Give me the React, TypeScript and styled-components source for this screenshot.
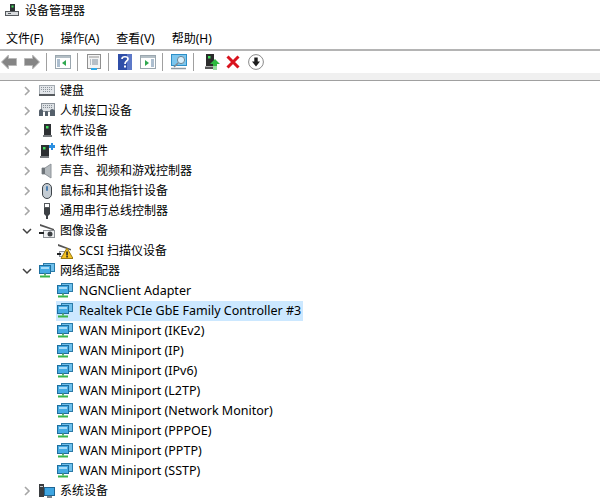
import { ReactNode } from 'react';
import styled, { createGlobalStyle } from 'styled-components';

const GlobalStyle = createGlobalStyle`
  html, body {
    margin: 0;
    padding: 0;
    background: #fff;
  }
`;

const Window = styled.div`
  width: 600px;
  height: 501px;
  overflow: hidden;
  background: #fff;
  color: #000;
  font-family: "Noto Sans", "Noto Sans CJK SC", sans-serif;
  font-size: 12px;
`;

const TitleBar = styled.div`
  display: flex;
  align-items: center;
  gap: 6px;
  height: 20px;
  padding-left: 5px;
`;

const MenuBar = styled.div`
  display: flex;
  align-items: center;
  gap: 17px;
  height: 29px;
  padding-left: 6px;
`;

const MenuItem = styled.span`
  line-height: 20px;
  padding-top: 8px;
`;

const Toolbar = styled.div`
  display: flex;
  align-items: center;
  height: 22px;
  padding-left: 1px;
  border-top: 2px solid #b4b4b4;
`;

const ToolIcon = styled.span<{ $gap?: number }>`
  display: flex;
  margin-left: ${p => p.$gap ?? 0}px;
`;

const Separator = styled.span`
  width: 1px;
  height: 18px;
  margin: 0 8px 0 6px;
  background: #a0a0a0;
`;

const ToolbarEdge = styled.div`
  height: 7px;
  background: #f0f0f0;
  border-bottom: 1px solid #a0a0a0;
`;

const Tree = styled.div`
  display: flex;
  flex-direction: column;
`;

const Row = styled.div<{ $child?: boolean }>`
  display: flex;
  align-items: center;
  height: 20px;
  padding-left: ${p => (p.$child ? 56 : 20)}px;
`;

const Chevron = styled.span`
  display: flex;
  justify-content: center;
  width: 14px;
  margin-right: 5px;
`;

const Label = styled.span<{ $selected?: boolean }>`
  display: flex;
  align-items: center;
  gap: 5px;
  height: 20px;
  white-space: nowrap;
  padding-right: 2px;
  background: ${p => (p.$selected ? '#cce8ff' : 'transparent')};
`;

const LabelText = styled.span<{ $latin?: boolean }>`
  margin-bottom: 2px;
  font-size: ${p => (p.$latin ? 12.5 : 12)}px;
`;

const ChildIcon = styled.span`
  display: flex;
  width: 18px;
  justify-content: center;
`;

const Svg = ({ children, w = 16, h = 16 }: { children: ReactNode; w?: number; h?: number }) => (
  <svg width={w} height={h} viewBox={`0 0 ${w} ${h}`} fill="none">{children}</svg>
);

const Right = () => (
  <svg width="8" height="10" viewBox="0 0 8 10"><path d="M2 1l4 4-4 4" stroke="#a6a6a6" strokeWidth="1.6" fill="none" /></svg>
);
const Down = () => (
  <svg width="10" height="8" viewBox="0 0 10 8"><path d="M1 2l4 4 4-4" stroke="#404040" strokeWidth="1.5" fill="none" /></svg>
);

const Arrow = ({ flip }: { flip?: boolean }) => (
  <svg width="16" height="16" viewBox="0 0 16 16">
    <path
      d={flip ? 'M0.500 4.500h8V1L15.500 8l-7 7v-3.500h-8z' : 'M15.500 4.500h-8V1L0.500 8l7 7v-3.500h8z'}
      fill="#858585"
      stroke="#b8b8b8"
    />
  </svg>
);

const PaneIcon = ({ arrow }: { arrow: 'left' | 'right' }) => (
  <Svg>
    <rect x="0.500" y="1.500" width="15" height="13" fill="#fff" stroke="#9aa6ae" />
    <rect x="1" y="2" width="14" height="2" fill="#b4bfc6" />
    <path d={arrow === 'left' ? 'M11 6v6L7 9z' : 'M5 6v6l4-3z'} fill="#2fa84f" />
    <path d={arrow === 'left' ? 'M2 6h3M2 8h3M2 10h3M2 12h3' : 'M11 6h3M11 8h3M11 10h3M11 12h3'} stroke="#5b7fa0" />
  </Svg>
);

const SheetIcon = () => (
  <Svg>
    <rect x="1.500" y="0.500" width="13" height="14" fill="#f4f4f4" stroke="#8f8f8f" />
    <rect x="3" y="2" width="10" height="2" fill="#c4c4c4" />
    <path d="M4 6h1M4 8h1M4 10h1M6 6h6M6 8h6M6 10h6" stroke="#7a8a9a" />
    <rect x="5" y="14" width="6" height="2" fill="#2da8e8" />
  </Svg>
);

const HelpIcon = () => (
  <svg width="14" height="16" viewBox="0 0 14 16">
    <rect width="14" height="16" fill="#2f4ea8" />
    <rect x="9" width="5" height="16" fill="#5c78c8" />
    <path d="M4 5c0-3 6-3 6 0 0 2-3 2-3 5" stroke="#fff" strokeWidth="1.700" fill="none" />
    <rect x="6" y="11.500" width="2" height="2" fill="#fff" />
  </svg>
);

const ScanIcon = () => (
  <Svg>
    <rect x="0.500" y="0.500" width="15" height="11" fill="#7cc6ee" stroke="#2c8fc8" />
    <path d="M0 14.500h15" stroke="#8f9aa3" strokeWidth="1.500" />
    <circle cx="10" cy="6" r="3.600" fill="#d6eefb" stroke="#6f8796" strokeWidth="1" />
    <path d="M7 9l-4 4" stroke="#7f8a92" strokeWidth="1.600" />
  </Svg>
);

const UpdateIcon = () => (
  <Svg>
    <rect x="2" y="0" width="8" height="12" fill="#2b2b2b" />
    <rect x="4" y="2" width="2.500" height="2.500" fill="#3fe05a" />
    <rect x="1" y="12.500" width="8" height="2.500" fill="#555" />
    <path d="M11 5l5 5h-3v2h-4v-2H6z" fill="#2dbb3f" />
    <path d="M9 13h4M9 15h4" stroke="#2dbb3f" />
  </Svg>
);

const RemoveIcon = () => (
  <svg width="14" height="14" viewBox="0 0 14 14">
    <path d="M1.500 1.500l11 11M12.500 1.500l-11 11" stroke="#d9131e" strokeWidth="3" />
  </svg>
);

const InstallIcon = () => (
  <Svg>
    <circle cx="8" cy="8" r="7.400" fill="#fff" stroke="#8a8a8a" />
    <path d="M6.300 3.500h3.400v4H12l-4 5-4-5h2.300z" fill="#1c1c1c" />
  </Svg>
);

const KeyboardIcon = () => (
  <Svg>
    <rect x="0.500" y="2.500" width="15" height="9" fill="#e3e6ea" stroke="#a3aab0" />
    <path d="M2 4.500h12M2 6.500h12M4 8.500h8" stroke="#8c949b" strokeDasharray="1 1" />
    <rect x="0" y="11" width="16" height="2" fill="#55595d" />
  </Svg>
);

const HidIcon = () => (
  <Svg>
    <rect x="2.500" y="0.500" width="13" height="8" fill="#dde1e5" stroke="#8f969d" />
    <path d="M4 2.500h10M4 4.500h10" stroke="#868e95" strokeDasharray="1 1" />
    <path d="M0 13V8c0-1 1-2 2-2s2 1 2 2v5zM6 13V9c0-1 1-1 1.500-1S9 8 9 9v4zM11 13V8c0-1 1-2 2-2s3 1 3 2v5z" fill="#55606b" />
  </Svg>
);

const DeviceIcon = () => (
  <Svg>
    <rect x="5" y="1" width="7" height="11" fill="#2d3033" />
    <rect x="7" y="3" width="2.500" height="2.500" fill="#45e060" />
    <rect x="4" y="12" width="9" height="2" fill="#777b7f" />
  </Svg>
);

const ComponentIcon = () => (
  <Svg>
    <rect x="2" y="2" width="8" height="11" fill="#2d3033" />
    <rect x="4" y="4" width="2.500" height="2.500" fill="#45e060" />
    <rect x="1" y="13" width="9" height="2" fill="#777b7f" />
    <path d="M12 0h2v2h2v3h-2v2h-2V5h-2V2h2z" fill="#2b8fe0" />
  </Svg>
);

const SoundIcon = () => (
  <Svg>
    <path d="M3 5h3l6-4v14L6 11H3z" fill="#b4babe" stroke="#8f959a" />
    <path d="M3 5h3v6H3z" fill="#6f757a" />
  </Svg>
);

const MouseIcon = () => (
  <Svg>
    <rect x="3.500" y="0.500" width="9" height="15" rx="4.500" fill="#c4ccd3" stroke="#3e4449" />
    <rect x="7" y="3" width="2" height="5" rx="1" fill="#4d7fb0" />
  </Svg>
);

const UsbIcon = () => (
  <Svg>
    <rect x="5.500" y="0.500" width="5" height="4" fill="#fff" stroke="#55595d" />
    <path d="M5 5h6v6l-2 2H7l-2-2z" fill="#3d4145" />
    <rect x="7" y="13" width="2" height="3" fill="#3d4145" />
  </Svg>
);

const CameraIcon = () => (
  <Svg>
    <path d="M1 1l14 5v1.500L1 3z" fill="#555" />
    <rect x="4.500" y="7.500" width="11" height="7" fill="#eef0f2" stroke="#8d9196" />
    <circle cx="11" cy="11" r="2.500" fill="#3b3f43" />
    <rect x="0" y="9" width="5" height="2" fill="#202224" />
  </Svg>
);

const ScannerWarningIcon = () => (
  <Svg>
    <path d="M1 1l13 5v1.500L1 3z" fill="#555" />
    <rect x="2.500" y="8.500" width="7" height="5" fill="#eef0f2" stroke="#8d9196" />
    <rect x="0" y="10" width="4" height="2" fill="#202224" />
    <path d="M10 5l6 10.500H4z" fill="#f4c021" stroke="#9a7a10" />
    <rect x="9.300" y="8.500" width="1.500" height="4" fill="#222" />
    <rect x="9.300" y="13" width="1.500" height="1.500" fill="#222" />
  </Svg>
);

const NetworkIcon = () => (
  <Svg>
    <rect x="4.500" y="0.500" width="11" height="8" fill="#6fc0ec" stroke="#2b7ba8" />
    <rect x="0.500" y="2.500" width="11" height="8" fill="#45abe4" stroke="#1f6f9e" />
    <path d="M2 4h8v2H2z" fill="#a8dcf7" />
    <rect x="5" y="10.500" width="2" height="2" fill="#5fae6a" />
    <path d="M1 13.500h10" stroke="#38b54a" strokeWidth="2" />
  </Svg>
);

const SystemIcon = () => (
  <Svg>
    <rect x="0" y="1" width="5" height="13" fill="#3a3d40" />
    <rect x="1" y="3" width="3" height="1" fill="#c8cccf" />
    <rect x="5.500" y="4.500" width="10" height="8" fill="#3fa6e2" stroke="#1f6593" />
    <rect x="8" y="13" width="5" height="2" fill="#7a8288" />
  </Svg>
);

const DeviceTitleIcon = () => (
  <Svg w={14} h={14}>
    <rect x="5" y="1" width="5" height="7" fill="#2d3033" />
    <rect x="6.500" y="2.500" width="2" height="2" fill="#45e060" />
    <rect x="0.500" y="8.500" width="13" height="4" fill="#d9dcdf" stroke="#55595d" />
    <rect x="3" y="10" width="3" height="1" fill="#55595d" />
  </Svg>
);

const topRows: [ReactNode, string][] = [
  [<KeyboardIcon />, '键盘'],
  [<HidIcon />, '人机接口设备'],
  [<DeviceIcon />, '软件设备'],
  [<ComponentIcon />, '软件组件'],
  [<SoundIcon />, '声音、视频和游戏控制器'],
  [<MouseIcon />, '鼠标和其他指针设备'],
  [<UsbIcon />, '通用串行总线控制器'],
];

const adapters = [
  'NGNClient Adapter',
  'Realtek PCIe GbE Family Controller #3',
  'WAN Miniport (IKEv2)',
  'WAN Miniport (IP)',
  'WAN Miniport (IPv6)',
  'WAN Miniport (L2TP)',
  'WAN Miniport (Network Monitor)',
  'WAN Miniport (PPPOE)',
  'WAN Miniport (PPTP)',
  'WAN Miniport (SSTP)',
];

export default function App() {
  return (
    <Window>
      <GlobalStyle />
      <TitleBar>
        <DeviceTitleIcon />
        设备管理器
      </TitleBar>
      <MenuBar>
        <MenuItem>文件(F)</MenuItem>
        <MenuItem>操作(A)</MenuItem>
        <MenuItem>查看(V)</MenuItem>
        <MenuItem>帮助(H)</MenuItem>
      </MenuBar>
      <Toolbar>
        <ToolIcon><Arrow /></ToolIcon>
        <ToolIcon $gap={7}><Arrow flip /></ToolIcon>
        <Separator />
        <ToolIcon><PaneIcon arrow="left" /></ToolIcon>
        <Separator />
        <ToolIcon><SheetIcon /></ToolIcon>
        <Separator />
        <ToolIcon $gap={1}><HelpIcon /></ToolIcon>
        <ToolIcon $gap={8}><PaneIcon arrow="right" /></ToolIcon>
        <Separator />
        <ToolIcon><ScanIcon /></ToolIcon>
        <Separator />
        <ToolIcon $gap={2}><UpdateIcon /></ToolIcon>
        <ToolIcon $gap={6}><RemoveIcon /></ToolIcon>
        <ToolIcon $gap={8}><InstallIcon /></ToolIcon>
      </Toolbar>
      <ToolbarEdge />
      <Tree>
        {topRows.map(([icon, text]) => (
          <Row key={text}>
            <Chevron><Right /></Chevron>
            <Label>{icon}<LabelText>{text}</LabelText></Label>
          </Row>
        ))}
        <Row>
          <Chevron><Down /></Chevron>
          <Label><CameraIcon /><LabelText>图像设备</LabelText></Label>
        </Row>
        <Row $child>
          <Label>
            <ChildIcon><ScannerWarningIcon /></ChildIcon>
            <LabelText>SCSI 扫描仪设备</LabelText>
          </Label>
        </Row>
        <Row>
          <Chevron><Down /></Chevron>
          <Label><NetworkIcon /><LabelText>网络适配器</LabelText></Label>
        </Row>
        {adapters.map((name, i) => (
          <Row $child key={name}>
            <Label $selected={i === 1}>
              <ChildIcon><NetworkIcon /></ChildIcon>
              <LabelText $latin>{name}</LabelText>
            </Label>
          </Row>
        ))}
        <Row>
          <Chevron><Right /></Chevron>
          <Label><SystemIcon /><LabelText>系统设备</LabelText></Label>
        </Row>
      </Tree>
    </Window>
  );
}
